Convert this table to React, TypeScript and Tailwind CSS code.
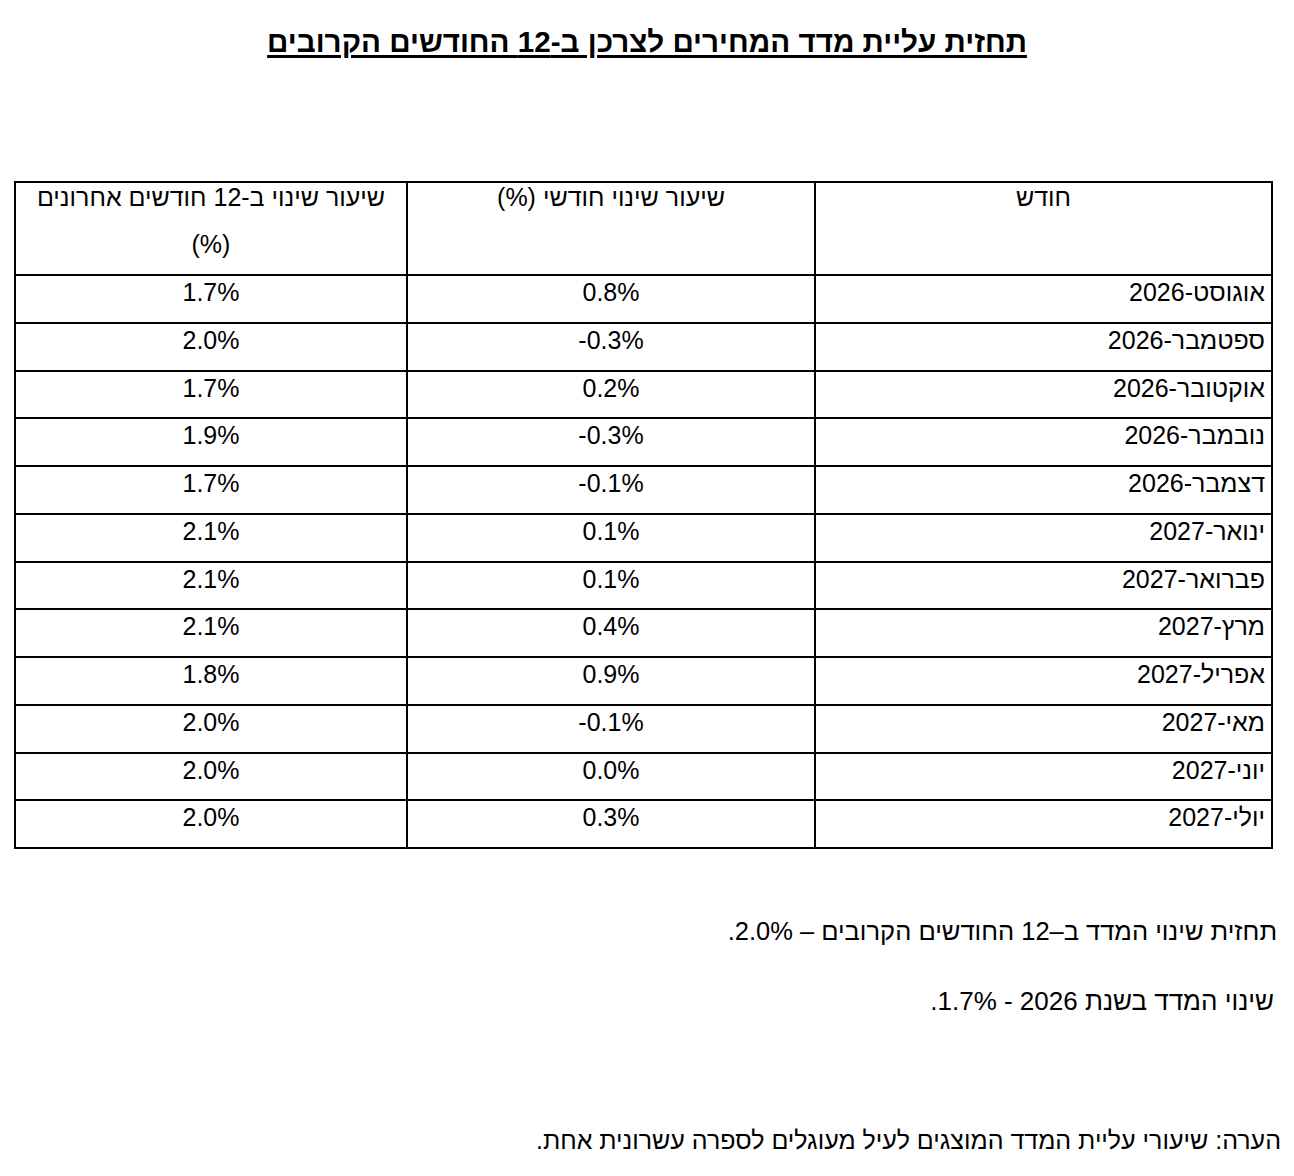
const rows: [string, string, string][] = [
  ["אוגוסט-2026", "0.8%", "1.7%"],
  ["ספטמבר-2026", "-0.3%", "2.0%"],
  ["אוקטובר-2026", "0.2%", "1.7%"],
  ["נובמבר-2026", "-0.3%", "1.9%"],
  ["דצמבר-2026", "-0.1%", "1.7%"],
  ["ינואר-2027", "0.1%", "2.1%"],
  ["פברואר-2027", "0.1%", "2.1%"],
  ["מרץ-2027", "0.4%", "2.1%"],
  ["אפריל-2027", "0.9%", "1.8%"],
  ["מאי-2027", "-0.1%", "2.0%"],
  ["יוני-2027", "0.0%", "2.0%"],
  ["יולי-2027", "0.3%", "2.0%"],
];

const cell = "border-2 border-black align-top p-0";

export default function App() {
  return (
    <div
      dir="rtl"
      className="w-[1294px] min-h-[1176px] bg-white text-black font-['Liberation_Sans','Noto_Sans_CJK_SC',sans-serif]"
    >
      <h1 className="pt-[22px] text-center text-[29.6px] font-bold leading-[40px] underline decoration-[3px] underline-offset-[3px]">
        תחזית עליית מדד המחירים לצרכן ב-12 החודשים הקרובים
      </h1>

      <table className="mt-[119px] mr-[21px] w-[1257px] table-fixed border-collapse text-[25px]">
        <colgroup>
          <col className="w-[457px]" />
          <col className="w-[408px]" />
          <col className="w-[392px]" />
        </colgroup>
        <thead>
          <tr>
            <th className={`${cell} font-normal`}>
              <div className="-mt-[9px] pb-[6px] leading-[47px]">חודש</div>
            </th>
            <th className={`${cell} font-normal`}>
              <div className="-mt-[9px] pb-[6px] leading-[47px]">שיעור שינוי חודשי (%)</div>
            </th>
            <th className={`${cell} font-normal`}>
              <div className="-mt-[9px] pb-[6px] leading-[47px]">
                שיעור שינוי ב-12 חודשים אחרונים (%)
              </div>
            </th>
          </tr>
        </thead>
        <tbody>
          {rows.map(([month, monthly, yearly]) => (
            <tr key={month}>
              <td className={cell}>
                <div className="h-[45.75px] pr-[6px] text-right leading-[33px]">{month}</div>
              </td>
              <td className={cell}>
                <div dir="ltr" className="h-[45.75px] text-center leading-[33px]">
                  {monthly}
                </div>
              </td>
              <td className={cell}>
                <div dir="ltr" className="h-[45.75px] text-center leading-[33px]">
                  {yearly}
                </div>
              </td>
            </tr>
          ))}
        </tbody>
      </table>

      <div className="pr-[17px] leading-[28px]">
        <p className="mt-[68px] text-[25.5px]">תחזית שינוי המדד ב–12 החודשים הקרובים – 2.0%.</p>
        <p className="mt-[42px] pr-[3px] text-[26px]">שינוי המדד בשנת 2026 - 1.7%.</p>
        <p className="mt-[111px] -mr-[4px] text-[25px]">
          הערה: שיעורי עליית המדד המוצגים לעיל מעוגלים לספרה עשרונית אחת.
        </p>
      </div>
    </div>
  );
}
